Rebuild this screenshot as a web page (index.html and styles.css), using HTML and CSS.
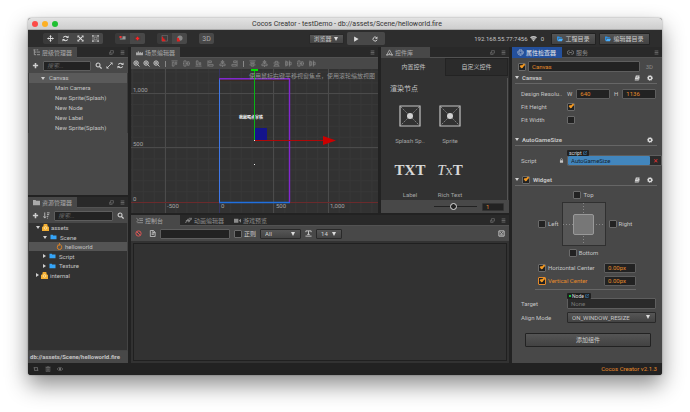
FILE: index.html
```html
<!DOCTYPE html>
<html lang="zh-CN">
<head>
<meta charset="utf-8">
<title>Cocos Creator - testDemo</title>
<link rel="stylesheet" href="styles.css">
</head>
<body>
<svg class="defs" aria-hidden="true">
  <symbol id="move" viewBox="0 0 16 16"><path d="M8 0l3 4H9v3h3V5l4 3-4 3V9H9v3h2l-3 4-3-4h2V9H4v2L0 8l4-3v2h3V4H5z" fill="currentColor"/></symbol>
  <symbol id="refresh" viewBox="0 0 16 16"><path d="M13 6A5.5 5.5 0 0 0 3 6M3 10a5.500 5.500 0 0 0 10 0" fill="none" stroke="currentColor" stroke-width="2.400"/><path d="M15 1v6H9zM1 15V9h6z" fill="currentColor"/></symbol>
  <symbol id="redo" viewBox="0 0 16 16"><path d="M12 4a5.500 5.500 0 1 0 1.500 6" fill="none" stroke="currentColor" stroke-width="2.400"/><path d="M14.500 1v6.500H8z" fill="currentColor"/></symbol>
  <symbol id="scale" viewBox="0 0 16 16"><path d="M3 3l10 10M13 3L3 13" stroke="currentColor" stroke-width="2.400"/><path d="M1 1h5L1 6zM15 1v5l-5-5zM1 15v-5l5 5zM15 15h-5l5-5z" fill="currentColor"/></symbol>
  <symbol id="rect" viewBox="0 0 16 16"><path d="M2 2h12v12H2zM5 5h6v6H5z" fill="none" stroke="currentColor" stroke-width="1.300"/><path d="M0 0h4v4H0zM12 0h4v4h-4zM0 12h4v4H0zM12 12h4v4h-4z" fill="currentColor"/></symbol>
  <symbol id="anchor" viewBox="0 0 16 16"><path d="M1 2h5v5H1z" fill="#e33"/><path d="M8 3h7v7H2V8h6z" fill="#999"/></symbol>
  <symbol id="center" viewBox="0 0 16 16"><path d="M1 3h14v10H1z" fill="#4a4040"/><path d="M8 4v8M4 8h8" stroke="#f22" stroke-width="3"/></symbol>
  <symbol id="local" viewBox="0 0 16 16"><path d="M2 1h13v13H2z" fill="#3c3c3c" stroke="#888"/><path d="M2 4v10h8v-3H8V8H5V4z" fill="#d22"/></symbol>
  <symbol id="world" viewBox="0 0 16 16"><circle cx="9" cy="7" r="6" fill="#888"/><path d="M2 6v9h7v-4H7V7z" fill="#d22"/></symbol>
  <symbol id="play" viewBox="0 0 16 16"><path d="M3 1l12 7-12 7z" fill="currentColor"/></symbol>
  <symbol id="wifi" viewBox="0 0 16 16"><path d="M0 5q8-6 16 0L8 15z" fill="currentColor"/><path d="M2 8q6-4 12 0M5 11q3-2 6 0" fill="none" stroke="#2d2d2d"/></symbol>
  <symbol id="folder" viewBox="0 0 16 16"><path d="M0 2h6l1 2h9v10H0z" fill="currentColor"/></symbol>
  <symbol id="open" viewBox="0 0 16 16"><path d="M0 1h6l1 2h6v3H4L1 13H0z" fill="#2f8fe0"/><path d="M5 7h11l-3 7H2z" fill="#4ab0ff"/></symbol>
  <symbol id="tree" viewBox="0 0 16 16"><path d="M1 2h5M3 2v11h4M3 7h5M9 7h7M9 13h7M8 2h4" fill="none" stroke="currentColor" stroke-width="1.800"/></symbol>
  <symbol id="scene" viewBox="0 0 16 16"><path d="M0 14V7l3 2 2-5 3 5 2-3 2 3 4-2v7z" fill="currentColor"/></symbol>
  <symbol id="widgets" viewBox="0 0 16 16"><path d="M8 2l6 11H2z" fill="none" stroke="currentColor" stroke-width="2"/><path d="M5 13l3-5 3 5zM0 12h5v3H0zM11 12h5v3h-5z" fill="currentColor"/></symbol>
  <symbol id="gearring" viewBox="0 0 16 16"><circle cx="8" cy="8" r="6" fill="none" stroke="currentColor" stroke-width="2" stroke-dasharray="3 1"/><circle cx="8" cy="8" r="3" fill="none" stroke="currentColor"/></symbol>
  <symbol id="link" viewBox="0 0 16 16"><path d="M6 4H4a3 4 0 0 0 0 8h2M10 4h2a3 4 0 0 1 0 8h-2M5 8h6" fill="none" stroke="currentColor" stroke-width="1.800"/></symbol>
  <symbol id="console" viewBox="0 0 16 16"><path d="M1 3l5 4-5 4M7 4h9M8 8h8M3 13h13" fill="none" stroke="currentColor" stroke-width="1.600"/></symbol>
  <symbol id="anim" viewBox="0 0 16 16"><path d="M0 12h3L6 5h3l-2 6h3l2-6h4M9 3h7M2 8h10" fill="none" stroke="currentColor" stroke-width="1.800"/></symbol>
  <symbol id="camera" viewBox="0 0 16 16"><path d="M0 4h10v9H0zM11 8l5-4v9z" fill="currentColor"/></symbol>
  <symbol id="popout" viewBox="0 0 16 16"><path d="M5 2h9v8H5zM2 6v8h9" fill="none" stroke="currentColor" stroke-width="2"/></symbol>
  <symbol id="menu" viewBox="0 0 16 16"><path d="M2 3h12M2 8h12M2 13h12" stroke="currentColor" stroke-width="2.400"/></symbol>
  <symbol id="plus" viewBox="0 0 16 16"><path d="M8 2v12M2 8h12" stroke="currentColor" stroke-width="3.600"/></symbol>
  <symbol id="search" viewBox="0 0 16 16"><circle cx="7" cy="7" r="4.500" fill="none" stroke="currentColor" stroke-width="2.400"/><path d="M10 10l5 5" stroke="currentColor" stroke-width="3"/></symbol>
  <symbol id="zoomin" viewBox="0 0 16 16"><circle cx="7" cy="7" r="5" fill="none" stroke="currentColor" stroke-width="2.200"/><path d="M10 10l5 5M4 7h6M7 4v6" stroke="currentColor" stroke-width="2"/></symbol>
  <symbol id="expand" viewBox="0 0 16 16"><path d="M3 13L13 3" stroke="currentColor" stroke-width="2"/><path d="M9 1h6v6zM1 9v6h6z" fill="currentColor"/></symbol>
  <symbol id="sort" viewBox="0 0 16 16"><path d="M4 1v12M1 10l3 4 3-4M9 2h6M9 6h5M9 10h3M9 14h2" fill="none" stroke="currentColor" stroke-width="1.800"/></symbol>
  <symbol id="al-h" viewBox="0 0 16 16"><path d="M1 2h14M3 5h4v9H3zM10 5h3v5h-3z" fill="none" stroke="currentColor" stroke-width="1.600"/></symbol>
  <symbol id="al-m" viewBox="0 0 16 16"><path d="M0 8h2M7 8h3M14 8h2M2 2h5v12H2zM10 4h4v8h-4z" fill="none" stroke="currentColor" stroke-width="1.600"/></symbol>
  <symbol id="al-b" viewBox="0 0 16 16"><path d="M1 14h14M3 2h4v9H3zM10 6h3v5h-3z" fill="none" stroke="currentColor" stroke-width="1.600"/></symbol>
  <symbol id="al-l" viewBox="0 0 16 16"><path d="M2 1v14M4 2h6v4H4zM4 10h10v4H4z" fill="none" stroke="currentColor" stroke-width="1.600"/></symbol>
  <symbol id="al-r" viewBox="0 0 16 16"><path d="M14 1v14M6 2h6v4H6zM2 10h10v4H2z" fill="none" stroke="currentColor" stroke-width="1.600"/></symbol>
  <symbol id="al-c" viewBox="0 0 16 16"><path d="M8 0v3M5 3h6v3H5zM8 6v3M2 9h12v4H2zM8 13v3" fill="none" stroke="currentColor" stroke-width="1.600"/></symbol>
  <symbol id="al-t" viewBox="0 0 16 16"><path d="M1 2h14M4 5h8v3H4zM1 11h14M5 11v3h6v-3" fill="none" stroke="currentColor" stroke-width="1.600"/></symbol>
  <symbol id="al-u" viewBox="0 0 16 16"><path d="M1 7h14M5 7V3h6v4M1 14h14M4 14v-4h8v4" fill="none" stroke="currentColor" stroke-width="1.600"/></symbol>
  <symbol id="al-d" viewBox="0 0 16 16"><path d="M2 1v14M2 4h4v8H2zM10 1v14M10 5h4v6h-4z" fill="none" stroke="currentColor" stroke-width="1.600"/></symbol>
  <symbol id="ban" viewBox="0 0 16 16"><circle cx="8" cy="8" r="6" fill="none" stroke="#e05555" stroke-width="2.200"/><path d="M4 4l8 8" stroke="#e05555" stroke-width="2.200"/></symbol>
  <symbol id="doc" viewBox="0 0 16 16"><path d="M3 1h7l4 4v10H3zM6 7h5M6 10h5M9 1v5h5" fill="none" stroke="currentColor" stroke-width="1.800"/></symbol>
  <symbol id="textsize" viewBox="0 0 16 16"><path d="M2 5V2h12v3M8 2v8M5 10h6M1 14h14" fill="none" stroke="currentColor" stroke-width="2"/></symbol>
  <symbol id="box" viewBox="0 0 16 16"><path d="M2 2h12v12H2z" fill="none" stroke="currentColor" stroke-width="2"/><path d="M4 5l4 3 4-3M5 11h6" fill="none" stroke="currentColor" stroke-width="2"/></symbol>
  <symbol id="gear" viewBox="0 0 16 16"><circle cx="8" cy="8" r="4.500" fill="none" stroke="currentColor" stroke-width="3.600"/><circle cx="8" cy="8" r="6.800" fill="none" stroke="currentColor" stroke-width="2" stroke-dasharray="3 2.340"/></symbol>
  <symbol id="book" viewBox="0 0 16 16"><path d="M5 1h10l-3 11H2z" fill="currentColor"/><path d="M7 4h5M6 7h5" stroke="#494949"/><path d="M2 14h10l3-9" fill="none" stroke="currentColor" stroke-width="1.600"/></symbol>
  <symbol id="lock" viewBox="0 0 16 16"><path d="M3 7h10v8H3z" fill="currentColor"/><path d="M5 7V5a3 3 0 0 1 6 0v2" fill="none" stroke="currentColor" stroke-width="2"/></symbol>
  <symbol id="db" viewBox="0 0 16 16"><path d="M4 0h8l1 5 3 2v9H0V7l3-2z" fill="#f3ae32"/><circle cx="8" cy="9" r="3" fill="none" stroke="#fff0c0" stroke-width="1.600"/></symbol>
  <symbol id="fire" viewBox="0 0 16 16"><path d="M8 1c1 3 6 5 5 9a5 5 0 0 1-10 0c0-3 2-4 2-6l2 2z" fill="none" stroke="#f08a20" stroke-width="2"/></symbol>
  <symbol id="trash" viewBox="0 0 16 16"><path d="M3 4h10v11H3zM1 3h14M6 1h4M6 6v7M8 6v7M10 6v7" fill="none" stroke="currentColor" stroke-width="1.500"/></symbol>
  <symbol id="loop" viewBox="0 0 16 16"><path d="M4 4v8h6M12 12V4H6M1 6l3-3 3 3M9 10l3 3 3-3" fill="none" stroke="currentColor" stroke-width="1.800"/></symbol>
  <symbol id="eye" viewBox="0 0 16 16"><path d="M0 8q8-9 16 0-8 9-16 0z" fill="none" stroke="currentColor" stroke-width="1.500"/><circle cx="8" cy="8" r="3" fill="currentColor"/></symbol>
  <symbol id="ext" viewBox="0 0 16 16"><path d="M8 3H2v11h11V9M6 10l8-8M9 1h6v6" fill="none" stroke="#3c8fd0" stroke-width="2"/></symbol>
  <symbol id="sprite" viewBox="0 0 22 22"><path d="M1 1h20v20H1z" fill="none" stroke="#c4c4c4" stroke-width="1.200"/><path d="M2 2l18 18M20 2L2 20" stroke="#999" stroke-width=".8" stroke-dasharray="1.500 1"/><circle cx="11" cy="11" r="3" fill="#d2d2d2"/></symbol>
</svg>

<div class="window">
  <header class="titlebar">
    <div class="lights"><i class="red"></i><i class="amber"></i><i class="green"></i></div>
    <h1>Cocos Creator - testDemo - db://assets/Scene/helloworld.fire</h1>
  </header>

  <div class="toolbar">
    <div class="tools">
      <div class="group"><button aria-label="Move"><svg><use href="#move"/></svg></button><button class="lit" aria-label="Rotate"><svg><use href="#refresh"/></svg></button><button class="lit" aria-label="Scale"><svg><use href="#scale"/></svg></button><button class="lit dim" aria-label="Rect"><svg><use href="#rect"/></svg></button></div>
      <div class="group"><button aria-label="Anchor"><svg><use href="#anchor"/></svg></button><button class="lit" aria-label="Center"><svg><use href="#center"/></svg></button></div>
      <div class="group"><button aria-label="Local"><svg><use href="#local"/></svg></button><button class="lit" aria-label="World"><svg><use href="#world"/></svg></button></div>
      <div class="group"><button class="lit dim three">3D</button></div>
    </div>
    <div class="run">
      <span class="pick browser"><select aria-label="Preview"><option>浏览器</option></select></span>
      <div class="group wide"><button class="lit" aria-label="Play"><svg><use href="#play"/></svg></button><button class="lit" aria-label="Reload"><svg><use href="#redo"/></svg></button></div>
    </div>
    <div class="links">
      <span class="ip">192.168.55.77:7456 <svg><use href="#wifi"/></svg> 0</span>
      <button class="raised"><svg><use href="#open"/></svg>工程目录</button>
      <button class="raised wider"><svg><use href="#open"/></svg>编辑器目录</button>
    </div>
  </div>

  <main class="dock">
    <div class="column left">
      <section class="panel hierarchy">
        <div class="tabs"><button class="tab on"><svg><use href="#tree"/></svg>层级管理器</button><span class="corner"><svg><use href="#popout"/></svg><svg><use href="#menu"/></svg></span></div>
        <div class="bar"><svg><use href="#plus"/></svg><input type="text" placeholder="搜索..." aria-label="搜索节点"><svg><use href="#search"/></svg><svg><use href="#expand"/></svg><svg><use href="#refresh"/></svg></div>
        <ul class="nodes">
          <li class="root"><i class="caret open"></i>Canvas</li>
          <li>Main Camera</li><li>New Sprite(Splash)</li><li>New Node</li><li>New Label</li><li>New Sprite(Splash)</li>
        </ul>
      </section>
      <section class="panel assets">
        <div class="tabs"><button class="tab on"><svg><use href="#folder"/></svg>资源管理器</button><span class="corner"><svg><use href="#popout"/></svg><svg><use href="#menu"/></svg></span></div>
        <div class="bar"><svg><use href="#plus"/></svg><svg><use href="#sort"/></svg><input type="text" placeholder="搜索..." aria-label="搜索资源"><svg><use href="#search"/></svg></div>
        <ul class="files">
          <li><i class="caret open"></i><svg><use href="#db"/></svg>assets</li>
          <li class="l1"><i class="caret open"></i><svg><use href="#folder"/></svg>Scene</li>
          <li class="l2 sel"><svg><use href="#fire"/></svg>helloworld</li>
          <li class="l1"><i class="caret"></i><svg><use href="#folder"/></svg>Script</li>
          <li class="l1"><i class="caret"></i><svg><use href="#folder"/></svg>Texture</li>
          <li><i class="caret"></i><svg><use href="#db"/></svg>internal</li>
        </ul>
        <p class="path">db://assets/Scene/helloworld.fire</p>
      </section>
    </div>

    <div class="column middle">
      <div class="upper">
        <section class="panel scene">
          <div class="tabs"><button class="tab on"><svg><use href="#scene"/></svg>场景编辑器</button><span class="corner"><svg><use href="#menu"/></svg></span></div>
          <div class="bar align">
            <div class="zooms"><svg><use href="#zoomin"/></svg><svg><use href="#zoomin"/></svg><svg><use href="#zoomin"/></svg></div><i class="sep"></i>
            <div class="set"><svg><use href="#al-h"/></svg><svg><use href="#al-m"/></svg><svg><use href="#al-b"/></svg><svg><use href="#al-l"/></svg><svg><use href="#al-c"/></svg><svg><use href="#al-r"/></svg></div><i class="sep"></i>
            <div class="set"><svg><use href="#al-t"/></svg><svg><use href="#al-c"/></svg><svg><use href="#al-u"/></svg><svg><use href="#al-d"/></svg><svg><use href="#al-m"/></svg><svg><use href="#al-d"/></svg></div>
          </div>
          <div class="stage">
            <svg viewBox="131 69 247 144" preserveAspectRatio="xMinYMax slice">
              <defs><pattern id="minor" x="219" y="202" width="10.880" height="10.880" patternUnits="userSpaceOnUse"><path d="M.5 0v11M0 .5h11" stroke="#373737"/></pattern></defs>
              <path d="M131 60h260v160H131" fill="#323232"/>
              <path d="M131 60h260v160H131z" fill="url(#minor)"/>
              <path d="M165.500 60v160M273.500 60v160M328.500 60v160M131 93.500h260M131 147.500h260" stroke="#4b4b4b"/>
              <path d="M219.500 60v160" stroke="#353560"/>
              <path d="M131 202.500h260" stroke="#6b2a2c"/>
              <path d="M220 80.500h69" stroke="#3c2a22"/>
              <path d="M219.500 79v124" stroke="#3f78e8"/>
              <path d="M219 202.500h71" stroke="#2070e0" stroke-width="1.400"/>
              <path d="M219 78.800h70.500V202" fill="none" stroke="#8327cf" stroke-width="1.400"/>
              <g class="ruler"><text x="133" y="92">1,000</text><text x="133" y="146">500</text><text x="133" y="201">0</text><text x="167" y="208">-500</text><text x="221" y="208">0</text><text x="276" y="208">500</text><text x="330" y="208">1,000</text></g>
              <text class="label" x="239" y="119">我就喝点拿铁</text>
              <path d="M254.500 70v70" stroke="#08b414"/>
              <path d="M251 69h7v2h-7z" fill="#0d0"/>
              <path d="M255 128h12v12h-12z" fill="#14148c"/>
              <path d="M254 140.500h70" stroke="#b00808"/>
              <path d="M323 136l13 4.500-13 4.500z" fill="#c00"/>
              <path d="M254 140h1v1h-1zM254 164h1v1h-1z" fill="#eee"/>
            </svg>
            <p class="hint">使用鼠标右键平移视窗焦点，使用滚轮缩放视图</p>
          </div>
        </section>
        <section class="panel library">
          <div class="tabs"><button class="tab on"><svg><use href="#widgets"/></svg>控件库</button><span class="corner"><svg><use href="#popout"/></svg><svg><use href="#menu"/></svg></span></div>
          <div class="subtabs"><button>内置控件</button><button class="off">自定义控件</button></div>
          <div class="shelf">
            <h2>渲染节点</h2>
            <div class="widgets">
              <figure><svg><use href="#sprite"/></svg><figcaption>Splash Sp..</figcaption></figure>
              <figure><svg><use href="#sprite"/></svg><figcaption>Sprite</figcaption></figure>
              <figure><span class="glyph">TXT</span><figcaption>Label</figcaption></figure>
              <figure><span class="glyph"><em>T</em><small>X</small>T</span><figcaption>Rich Text</figcaption></figure>
            </div>
          </div>
          <div class="size"><input type="range" min="0" max="100" value="44" aria-label="Icon size"><input type="text" value="1" aria-label="Icon scale"></div>
        </section>
      </div>
      <section class="panel console">
        <div class="tabs"><button class="tab on"><svg><use href="#console"/></svg>控制台</button><button class="tab"><svg><use href="#anim"/></svg>动画编辑器</button><button class="tab"><svg><use href="#camera"/></svg>游戏预览</button><span class="corner"><svg><use href="#popout"/></svg><svg><use href="#menu"/></svg></span></div>
        <div class="bar"><svg><use href="#ban"/></svg><svg class="gapped"><use href="#doc"/></svg><input type="text" aria-label="过滤"><label class="check"><input type="checkbox">正则</label><span class="pick level"><select aria-label="Level"><option>All</option></select></span><svg><use href="#textsize"/></svg><span class="pick font"><select aria-label="Font size"><option>14</option></select></span><svg class="end"><use href="#box"/></svg></div>
        <div class="log"></div>
      </section>
    </div>

    <section class="panel inspector">
      <div class="tabs"><button class="tab focus"><svg><use href="#gearring"/></svg>属性检查器</button><button class="tab"><svg><use href="#link"/></svg>服务</button><span class="corner"><svg><use href="#menu"/></svg></span></div>
      <div class="props">
        <div class="name"><input type="checkbox" checked aria-label="Active"><input type="text" value="Canvas" aria-label="Name"><span>3D</span></div>
        <h3><i class="caret open"></i><span>Canvas</span><svg><use href="#book"/></svg><svg><use href="#gear"/></svg></h3>
        <div class="fields first">
          <div class="row"><span class="key">Design Resolu..</span><div class="pair"><label for="w">W</label><input id="w" type="text" value="640"><label for="h">H</label><input id="h" type="text" value="1136"></div></div>
          <div class="row"><label class="key" for="fh">Fit Height</label><input id="fh" type="checkbox" checked></div>
          <div class="row"><label class="key" for="fw">Fit Width</label><input id="fw" type="checkbox"></div>
        </div>
        <h3><i class="caret open"></i><span>AutoGameSize</span><svg><use href="#gear"/></svg></h3>
        <div class="fields script">
          <div class="row"><label class="key" for="sc">Script</label><svg class="lock"><use href="#lock"/></svg><div class="ref blue"><span class="chip">script <svg><use href="#ext"/></svg></span><input id="sc" type="text" value="AutoGameSize"><button aria-label="Remove">✕</button></div></div>
        </div>
        <h3><i class="caret open"></i><input type="checkbox" checked aria-label="Widget enabled"><span>Widget</span><svg><use href="#book"/></svg><svg><use href="#gear"/></svg></h3>
        <div class="cross">
          <label class="check top"><input type="checkbox">Top</label>
          <label class="check lft"><input type="checkbox">Left</label>
          <div class="pad"><i></i></div>
          <label class="check rgt"><input type="checkbox">Right</label>
          <label class="check bot"><input type="checkbox">Bottom</label>
        </div>
        <div class="centers">
          <div><label class="check"><input type="checkbox" checked>Horizontal Center</label><input type="text" value="0.00px" aria-label="Horizontal offset"></div>
          <div class="hot"><label class="check"><input type="checkbox" checked>Vertical Center</label><input type="text" value="0.00px" aria-label="Vertical offset"></div>
        </div>
        <div class="fields last">
          <div class="row"><label class="key" for="tg">Target</label><div class="ref"><span class="chip"><b></b>Node <svg><use href="#ext"/></svg></span><input id="tg" type="text" placeholder="None"></div></div>
          <div class="row"><label class="key" for="am">Align Mode</label><span class="pick mode"><select id="am"><option>ON_WINDOW_RESIZE</option></select></span></div>
        </div>
        <button class="raised add">添加组件</button>
      </div>
    </section>
  </main>

  <footer class="status"><svg><use href="#loop"/></svg><svg><use href="#trash"/></svg><svg><use href="#eye"/></svg><span>Cocos Creator v2.1.3</span></footer>
</div>
</body>
</html>
```
FILE: styles.css
```css
* { box-sizing: border-box; margin: 0; padding: 0; }
body { display: flex; min-height: 100vh; padding: 18px 28px 37px; background: #fff; color: #c4c4c4; font: 6px/8px Roboto, "Noto Sans CJK SC", sans-serif; }
button, input, select { min-width: 0; border: 0; background: none; color: inherit; font: inherit; appearance: none; }
ul { list-style: none; }
svg { display: block; flex: none; width: 7px; height: 7px; }
.defs { position: absolute; width: 0; height: 0; }
.window { display: flex; flex: 1; flex-direction: column; min-width: 0; overflow: hidden; border-radius: 3px; background: #222; box-shadow: 0 10px 22px rgba(0,0,0,.45), 0 0 2px rgba(0,0,0,.4); }

.titlebar { display: grid; grid-template-columns: 1fr auto 1fr; align-items: center; height: 12px; padding-left: 4px; border-bottom: 1px solid #aaa; background: linear-gradient(#e2e2e2, #cecece); color: #333; }
.titlebar h1 { font-size: 7px; font-weight: 400; }
.lights { display: flex; gap: 4px; }
.lights i { width: 6px; height: 6px; border-radius: 50%; }
.red { background: #fc4b48; }
.amber { background: #fdb024; }
.green { background: #1fc032; }

.toolbar { display: grid; grid-template-columns: 1fr auto 1fr; align-items: center; height: 17px; padding: 0 12px 0 15px; background: #2d2d2d; }
.tools, .run, .links, .group { display: flex; align-items: center; }
.tools { gap: 12px; }
.group { overflow: hidden; border-radius: 2px; background: #3a3a3a; }
.group button { display: flex; align-items: center; justify-content: center; width: 15px; height: 11px; color: #ddd; }
.group .lit { background: #484848; }
.group .dim { color: #aaa; }
.group .three { font-size: 7px; }
.wide .lit { width: 19px; height: 13px; }
.wide svg { width: 6px; height: 6px; }
.run { gap: 3px; }
.links { justify-content: flex-end; gap: 3px; }
.ip { display: flex; align-items: center; gap: 2px; margin-right: 4px; }
.ip svg { margin-right: 2px; }
.raised { display: flex; align-items: center; justify-content: center; gap: 2px; width: 45px; height: 12px; border: 1px solid #222; border-radius: 1px; background: linear-gradient(#555, #424242); color: #ccc; }
.raised svg { width: 6px; height: 6px; }
.wider { width: 51px; }

.pick { display: flex; position: relative; height: 10px; border: 1px solid #292929; border-radius: 1px; background: linear-gradient(#565656, #434343); }
.pick select { width: 100%; padding-left: 4px; }
.pick::after { position: absolute; top: 2px; right: 5px; border: 2px solid transparent; border-top: 4px solid #ddd; border-bottom: 0; content: ""; pointer-events: none; }
.browser { width: 35px; }

.dock { display: grid; flex: 1; grid-template-columns: 100px 1fr 150px; gap: 3px; min-height: 0; }
.column, .panel { display: flex; flex-direction: column; min-width: 0; min-height: 0; }
.column { gap: 2px; }
.panel { background: #323232; }
.hierarchy { flex: 148; background: #484848; }
.assets { flex: 166; }

.tabs { display: flex; flex: none; height: 11px; border-bottom: 1px solid #525252; background: #292929; color: #8c8c8c; }
.tab { display: flex; align-items: center; gap: 2px; width: 49px; height: 11px; padding-left: 5px; }
.tab.on { background: #484848; color: #a9a9a9; }
.tab.focus { width: 50px; background: #24509c; color: #e8e8e8; }
.corner { display: flex; align-items: center; gap: 6px; margin-left: auto; padding-right: 3px; color: #777; }
.corner svg { width: 5px; height: 5px; }

.bar { display: flex; flex: none; align-items: center; gap: 4px; height: 15px; padding: 0 4px; background: #484848; color: #d0d0d0; }
.bar input[type=text] { flex: 1; }
input[type=text] { height: 10px; padding: 0 3px; border: 1px solid #5e5e5e; border-radius: 1px; background: #222; }
input::placeholder { color: #666; font-style: italic; opacity: 1; }

.nodes { border: solid #393939; border-width: 0 1px; }
.nodes li { height: 10px; padding-left: 26px; line-height: 10px; }
.nodes .root { display: flex; align-items: center; gap: 4px; padding-left: 12px; background: #5a5a5a; }
.caret { flex: none; width: 3px; height: 4px; border: solid transparent; border-width: 2px 0 2px 3px; border-left-color: #d0d0d0; }
.caret.open { width: 4px; height: 3px; border-width: 3px 2px 0; border-color: #d0d0d0 transparent transparent; }

.files { flex: 1; border: solid #444; border-width: 0 1px 1px; }
.files li { display: flex; align-items: center; gap: 2px; height: 9px; padding-left: 7px; line-height: 9px; }
.files li:nth-child(even) { height: 10px; }
.files .l1 { padding-left: 14px; }
.files .l1 svg { height: 6px; margin: 0 1px; color: #35a4f8; }
.files .l2 { padding-left: 27px; }
.files .sel { background: #545454; }
.path { height: 12px; padding-left: 2px; background: #484848; font-weight: 700; line-height: 12px; }

.upper { display: grid; flex: 166; grid-template-columns: minmax(0, 247fr) minmax(0, 128fr); gap: 3px; min-height: 0; }
.console { flex: 148; }
.bar.align { gap: 5px; height: 11px; padding: 0 2px; color: #8a8a8a; }
.zooms { display: flex; gap: 3px; color: #ccc; }
.set { display: flex; gap: 5px; }
.sep { width: 1px; height: 6px; background: #888; }
.stage { position: relative; flex: 1; min-height: 0; overflow: hidden; }
.stage svg { width: 100%; height: 100%; }
.ruler { fill: #a4a4a4; }
.label { fill: #fff; font-size: 4px; font-weight: 700; }
.hint { position: absolute; top: 3px; right: 3px; color: #949494; white-space: nowrap; }

.subtabs { display: grid; flex: none; grid-template-columns: 1fr 1fr; height: 18px; margin: 0 1px; }
.subtabs .off { border: 1px solid #232323; background: #2b2b2b; }
.shelf { flex: 1; min-height: 0; overflow: hidden; margin: 2px 1px 0; padding: 7px 8px 0; border-right: 1px solid #555; }
.shelf h2 { height: 20px; font-size: 7px; font-weight: 400; }
.widgets { display: grid; grid-template-columns: 40px 40px; gap: 14px 0; }
.widgets figure { display: flex; flex-direction: column; align-items: center; gap: 10px; }
.widgets svg { width: 22px; height: 22px; }
.widgets figcaption { color: #a4a4a4; }
.glyph { height: 22px; color: #d8d8d8; font: 700 15px/22px "Liberation Serif", serif; }
.glyph em { font-weight: 400; }
.glyph small { font-size: 10px; font-weight: 400; }
.size { display: flex; flex: none; align-items: center; justify-content: flex-end; gap: 5px; height: 13px; padding-right: 5px; background: #484848; color: #e08a30; }
.size input[type=text] { width: 22px; height: 8px; border-color: #333; }
.size input[type=range] { width: 43px; height: 8px; background: linear-gradient(#222, #222) center / 100% 1px no-repeat; }
input[type=range]::-webkit-slider-thumb { width: 7px; height: 7px; border: 1px solid #ddd; border-radius: 50%; background: #222; appearance: none; }

.console .bar input[type=text] { flex: 0 0 70px; }
.gapped { margin-left: 3px; }
.check { display: flex; align-items: center; gap: 2px; }
input[type=checkbox] { display: flex; flex: none; align-items: center; justify-content: center; width: 8px; height: 8px; border: 1px solid #6a6a6a; border-radius: 1px; background: #222; }
input[type=checkbox]:checked::before { box-sizing: content-box; width: 3px; height: 1px; margin-top: -2px; border: solid #f59a23; border-width: 0 0 2px 2px; content: ""; transform: rotate(-45deg); }
.level { width: 41px; }
.font { width: 26px; }
.end { margin-left: auto; }
.log { flex: 1; margin: 2px; border: 1px solid #202020; }

.inspector { background: #484848; }
.props { display: flex; flex-direction: column; padding: 3px 0 0 3px; }
.name { display: flex; align-items: center; gap: 2px; height: 11px; padding: 0 9px 0 3px; color: #888; }
.name input[type=text] { flex: 1; height: 11px; margin-right: 4px; color: #e58a2a; }
.props h3 { display: flex; align-items: center; gap: 3px; height: 12px; margin-right: 5px; padding-right: 4px; border-bottom: 1px solid #666; font-size: 6px; font-weight: 700; }
.props h3 span { flex: 1; }
.props h3 svg { width: 6px; height: 6px; margin-left: 4px; color: #ddd; }
.fields { display: flex; flex-direction: column; gap: 2px; padding: 4px 6px 0; }
.first { height: 50px; }
.script { height: 28px; padding-top: 9px; }
.row { display: flex; align-items: center; height: 11px; }
.key { flex: 0 0 46px; white-space: nowrap; }
.pair { display: flex; flex: 1; align-items: center; gap: 4px; min-width: 0; }
.pair input { flex: 1; width: 0; color: #e58a2a; }
.lock { width: 5px; height: 5px; margin: 0 4px 0 -8px; }
.lock + .ref { margin-left: -1px; }
.ref { display: flex; position: relative; flex: 1; height: 11px; border: 1px solid #5e5e5e; border-radius: 1px; background: #2a2a2a; }
.ref input[type=text] { flex: 1; height: 9px; border: 0; background: none; }
.ref input::placeholder { color: #777; font-style: normal; }
.ref.blue input[type=text] { background: #4286bd; color: #16222c; }
.blue button { width: 11px; color: #e33; }
.chip { display: flex; position: absolute; top: -6px; left: -1px; align-items: center; gap: 1px; height: 6px; padding: 0 2px; border-radius: 1px; background: #202020; color: #ddd; font-size: 5px; line-height: 6px; }
.chip svg { width: 4px; height: 4px; }
.chip b { width: 2px; height: 2px; background: #1c3; }
.cross { display: grid; grid-template-columns: 1fr 44px 1fr; justify-items: center; align-items: center; gap: 3px; padding: 5px 22px 0 12px; }
.top, .bot { grid-column: 1 / 4; }
.lft { justify-self: end; }
.rgt { justify-self: start; }
.pad { display: grid; width: 44px; height: 44px; place-items: center; border: 1px solid #303030; background: repeating-linear-gradient(#888 0 1px, transparent 1px 3px) center / 1px 100% no-repeat, repeating-linear-gradient(90deg, #888 0 1px, transparent 1px 3px) center / 100% 1px no-repeat, #565656; }
.pad i { width: 21px; height: 21px; border: 1px solid #999; border-radius: 2px; background: #777; }
.centers { display: flex; flex-direction: column; gap: 2px; margin: 5px 26px 0 20px; padding: 0 0 3px 3px; border-bottom: 1px solid #666; }
.centers div { display: flex; align-items: center; justify-content: space-between; height: 11px; }
.centers input[type=text] { width: 32px; color: #e58a2a; }
.hot .check { color: #e58a2a; }
.hot input[type=checkbox] { border-color: #e58a2a; }
.last { gap: 3px; padding-top: 8px; }
.mode { flex: 1; height: 11px; }
.add { width: auto; height: 14px; margin: 10px 11px 0 10px; }

.status { display: flex; align-items: center; gap: 6px; height: 12px; padding: 0 5px; background: #222; color: #777; }
.status svg { width: 6px; height: 6px; }
.status span { margin-left: auto; color: #e58a2a; }
```
